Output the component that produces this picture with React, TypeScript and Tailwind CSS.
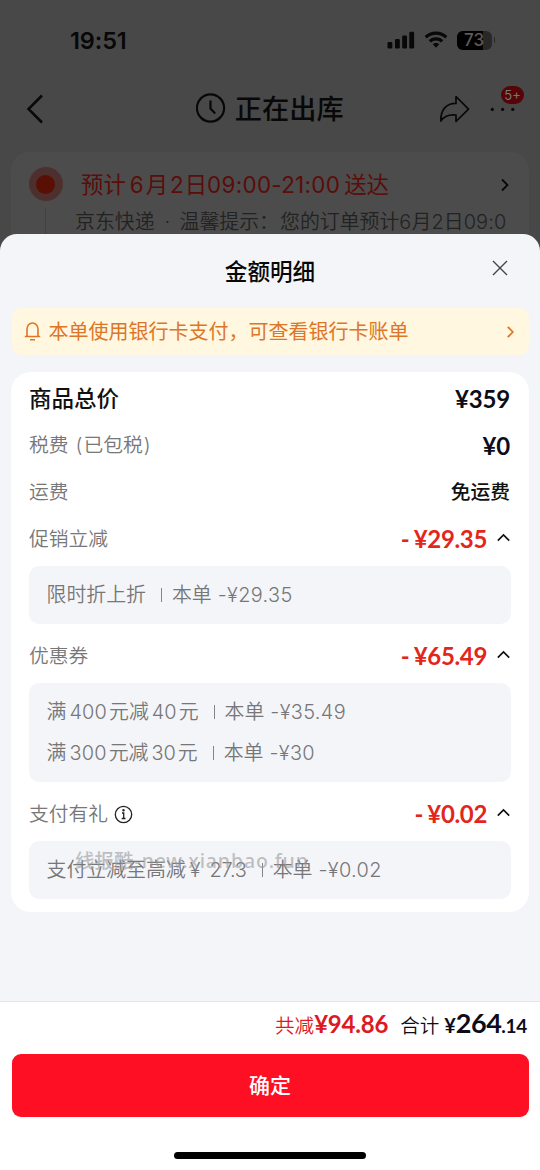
import React from "react";

const cjk = "font-['Inter','Noto_Sans_CJK_SC',sans-serif]";
const num = "font-['Lato','Noto_Sans_CJK_SC',sans-serif]";

function StatusBar() {
  return (
    <div className="flex h-[82px] items-center justify-between pl-[70px] pr-[45px]">
      <span className="text-[23.500px] font-semibold leading-none tracking-[-0.100px]">19:51</span>
      <div className="mb-[2px] flex items-center">
        <svg width="28" height="18" viewBox="0 0 28 18" fill="currentColor">
          <rect x="0.500" y="11" width="4.800" height="6.500" rx="1.300" />
          <rect x="8" y="8" width="4.800" height="9.500" rx="1.300" />
          <rect x="15.200" y="4.500" width="4.800" height="13" rx="1.300" />
          <rect x="22.300" y="0.800" width="4.800" height="16.700" rx="1.300" />
        </svg>
        <svg className="ml-[9px]" width="24" height="18" viewBox="0 0 24 18" fill="currentColor">
          <path d="M12 0.500C7.500 0.500 3.500 2.200 0.600 5.100L2.900 7.400C5.300 5.100 8.400 3.800 12 3.800s6.700 1.300 9.100 3.600L23.400 5.100C20.500 2.200 16.500 0.500 12 0.500Z" />
          <path d="M12 6.300c-2.900 0-5.400 1.100-7.300 2.900L7 11.500c1.300-1.200 3-2 5-2s3.700.8 5 2l2.300-2.300C17.400 7.400 14.900 6.300 12 6.300Z" />
          <path d="M12 12c-1.300 0-2.400.5-3.200 1.300L12 16.800l3.200-3.500C14.400 12.500 13.300 12 12 12Z" />
        </svg>
        <div className="relative ml-[9px] flex h-[19px] w-[35px] items-center justify-center overflow-hidden rounded-[6px] bg-[#282828]">
          <div className="absolute inset-y-0 left-0 w-[26px] bg-black" />
          <span className="relative text-[17px] font-medium leading-none text-[#5b5b5b]">73</span>
        </div>
        <div className="ml-[2px] h-[6px] w-[1.500px] rounded-r bg-[#292929]" />
      </div>
    </div>
  );
}

function NavBar() {
  return (
    <div className="grid h-[70px] grid-cols-[180px_1fr_180px] items-start">
      <svg className="ml-[25px] mt-[12px]" width="20" height="30" viewBox="0 0 20 30" fill="none" stroke="currentColor" strokeWidth="2.500">
        <path d="M17 1.500 3.500 15l13.500 13.500" />
      </svg>
      <div className="mt-[7px] flex items-center justify-center">
        <svg className="mb-[3px]" width="30" height="30" viewBox="0 0 30 30" fill="none" stroke="currentColor" strokeWidth="2.200">
          <circle cx="14.500" cy="15" r="13.600" />
          <path d="M14.500 7.500V15.500l4.700 5" />
        </svg>
        <span className="ml-[8.500px] mt-[1px] whitespace-nowrap text-[27.200px] font-medium leading-[40px]">正在出库</span>
      </div>
      <div className="mt-[13px] flex justify-end pr-[16px]">
        <svg className="mr-[20px]" width="31" height="28" viewBox="0 0 31 28" fill="none" stroke="currentColor" strokeWidth="1.700" strokeLinejoin="round">
          <path d="M17 1.500 29.500 14.200 17 26.500V20C10 19.300 5 21 1.800 26 1.500 14.500 7.500 8.300 17 8.400Z" />
        </svg>
        <div className="relative h-[28px] w-[34px]">
          <svg className="mt-[12px]" width="26" height="5" viewBox="0 0 26 5" fill="currentColor">
            <circle cx="2.300" cy="2.400" r="1.600" />
            <circle cx="12.600" cy="2.400" r="1.600" />
            <circle cx="22.800" cy="2.400" r="1.600" />
          </svg>
          <span className="absolute -top-[9px] left-[11px] flex h-[18px] w-[23px] items-center justify-center rounded-full bg-[#560408] text-[13px] leading-none text-[#777]">5+</span>
        </div>
      </div>
    </div>
  );
}

function Delivery() {
  return (
    <div className="mx-[11px] flex h-[110px] rounded-[18px] bg-[#4c4c4c] pl-[17px] pt-[15px]">
      <div className="flex w-[35px] flex-col items-center">
        <div className="flex size-[34px] shrink-0 items-center justify-center rounded-full bg-[#4d302d]">
          <div className="size-[19px] rounded-full bg-[#5a0f05]" />
        </div>
        <div className="mt-[7px] h-[50px] w-px bg-[#414141]" />
      </div>
      <div className="ml-[12px] flex-1">
        <div className="flex h-[35px] items-center justify-between pl-[6px] pr-[20px]">
          <span className="mt-[2px] flex items-center whitespace-nowrap text-[22.400px] leading-none text-[#5b0d09]">
            预计<span className="ml-[4px]">6</span><span className="ml-[2px]">月</span><span className="ml-[2px]">2</span><span className="ml-[1px]">日</span>
            <span className="tracking-[0.300px]">09:00-21:00</span><span className="ml-[4px]">送达</span>
          </span>
          <svg width="8" height="14" viewBox="0 0 8 14" fill="none" stroke="currentColor" strokeWidth="1.800"><path d="m1 1.500 5.500 5.500L1 12.500" /></svg>
        </div>
        <div className="mt-[6px] flex whitespace-nowrap text-[19.900px] font-[350] leading-[28px] text-[#222]">
          <span>京东快递</span><span className="ml-[10px] w-[15px]">·</span><span>温馨提示：<span className="ml-[1px]">您的订单预计</span></span><span className="tracking-[0.100px]">6月2日09:0</span>
        </div>
      </div>
    </div>
  );
}

function Caret() {
  return <svg className="mb-[4px] ml-[10px] mr-[1px]" width="13" height="9" viewBox="0 0 13 9" fill="none" stroke="#111" strokeWidth="1.700"><path d="M.8 7.700 6.500 2l5.700 5.700" /></svg>;
}

function Row({ label, children }: { label: React.ReactNode; children: React.ReactNode }) {
  return (
    <div className="flex h-[47px] items-center justify-between text-[19.800px] font-[350] leading-none text-[#777]">
      <div className="mt-[1px] flex items-center whitespace-nowrap">{label}</div>
      <div className="flex items-center whitespace-nowrap text-[#0c0d18]">{children}</div>
    </div>
  );
}

function Price({ value }: { value: string }) {
  return <span className={`${num} mr-[1px] text-[24px] font-bold tracking-[-0.150px]`}>¥{value}</span>;
}

function Discount({ value }: { value: string }) {
  return (
    <div className={`${num} mb-[1px] flex items-center text-[24px] font-bold text-[#e3261a]`}>
      <span className="mr-[4px]">-</span>
      <span className="tracking-[-0.350px]">¥{value}</span>
      <Caret />
    </div>
  );
}

function Detail({ name, amount }: { name: React.ReactNode; amount: string }) {
  return (
    <div className="flex h-[41px] items-center whitespace-nowrap text-[19.900px] font-[350] leading-none text-[#777]">
      <span className="mt-[2px] flex items-center">{name}</span>
      <span className="ml-[15px] h-[14px] w-px bg-[#858585]" />
      <span className="ml-[10px] mt-[2px]">本单</span>
      <span className="ml-[6px] mt-[2px] tracking-[0.350px]">-¥{amount}</span>
    </div>
  );
}

function Box({ children }: { children: React.ReactNode }) {
  return <div className="mt-[2.500px] rounded-[10px] bg-[#f4f5f9] px-[17.500px] py-[8.500px]">{children}</div>;
}

export default function App() {
  return (
    <div className={`relative h-[1170px] w-[540px] overflow-hidden bg-[#484848] text-[#080808] ${cjk}`}>
      <StatusBar />
      <NavBar />
      <Delivery />
      <section className="absolute inset-x-0 bottom-0 top-[234px] flex flex-col rounded-t-[17px] bg-[#f4f5f9]">
        <div className="grid h-[74px] grid-cols-[60px_1fr_60px] items-center">
          <span />
          <h1 className="mt-[2px] text-center text-[22.600px] font-medium leading-none">金额明细</h1>
          <svg className="mb-[6px] ml-[12px]" width="16" height="16" viewBox="0 0 16 16" fill="none" stroke="#444" strokeWidth="1.400"><path d="m1 1 14 14M15 1 1 15" /></svg>
        </div>
        <div className="mx-[11.500px] flex h-[47px] shrink-0 items-center rounded-[9px] bg-[#fff7df] pl-[12px] pr-[15px] text-[#de7627]">
          <svg className="mb-[1px]" width="17" height="20" viewBox="0 0 17 20" fill="none" stroke="currentColor" strokeWidth="1.600">
            <path d="M3 15.500V8a5.500 6 0 0 1 11 0v7.500M.8 15.500h15.400M6 18.700h5" />
          </svg>
          <span className="ml-[8px] mt-[1px] flex-1 whitespace-nowrap text-[20px] leading-none">本单使用银行卡支付，可查看银行卡账单</span>
          <svg width="7" height="12" viewBox="0 0 7 12" fill="none" stroke="currentColor" strokeWidth="1.800"><path d="m.8.800 5 5.200-5 5.200" /></svg>
        </div>
        <div className="mx-[11px] mt-[17px] h-[540px] shrink-0 rounded-[20px] bg-white px-[18px] pt-[3px]">
          <Row label={<span className="text-[22.500px] font-medium text-[#111]">商品总价</span>}>
            <Price value="359" />
          </Row>
          <Row label={<><span>税费</span><span className="ml-[7px]">(</span><span className="mx-[1px]">已包税</span><span>)</span></>}>
            <Price value="0" />
          </Row>
          <Row label="运费"><span className="mr-[1px] mt-[1px] font-medium text-[#111]">免运费</span></Row>
          <Row label="促销立减"><Discount value="29.35" /></Row>
          <Box><Detail name="限时折上折" amount="29.35" /></Box>
          <div className="mt-[9.500px]">
            <Row label="优惠券"><Discount value="65.49" /></Row>
            <Box>
              <Detail name={<>满<span className="ml-[3px] mr-[2px] tracking-[0.200px]">400</span>元减<span className="ml-[3px] mr-[2px]">40</span>元</>} amount="35.49" />
              <Detail name={<>满<span className="ml-[3px] mr-[2px] tracking-[0.200px]">300</span>元减<span className="ml-[3px] mr-[2px]">30</span>元</>} amount="30" />
            </Box>
          </div>
          <div className="mt-[9.500px]">
            <Row
              label={
                <>
                  支付有礼
                  <svg className="mb-[1px] ml-[6px]" width="19" height="19" viewBox="0 0 19 19" fill="none" stroke="#222" strokeWidth="1.300">
                    <circle cx="9.500" cy="9.500" r="8.200" />
                    <path d="M8 8h1.700v5.500M7.700 13.500h3.800" />
                    <circle cx="9.500" cy="5.300" r=".6" fill="#222" />
                  </svg>
                </>
              }
            >
              <Discount value="0.02" />
            </Row>
            <div className="relative">
              <Box><Detail name={<>支付立减至高减<span className="ml-[4px]">¥</span><span className="ml-[9px] tracking-[-0.200px]">27.3</span></>} amount="0.02" /></Box>
              <span className="absolute left-[46px] top-[9px] flex whitespace-nowrap font-['Noto_Sans','Noto_Sans_CJK_SC',sans-serif] text-[19.500px] font-medium leading-[22px] text-[#999]/60">线报酷<span className="ml-[1px] tracking-[0.850px]">-new.xianbao.fun</span></span>
            </div>
          </div>
        </div>
        <div className="mt-[89px] flex-1 border-t border-[#e5e6e8] bg-white">
          <div className="flex h-[52px] items-baseline justify-end whitespace-nowrap pr-[13px] pt-[6px] text-[19.500px] leading-[30px] text-[#0c0d18]">
            <span className="font-[350] text-[#df1923]">共减</span>
            <span className={`${num} mr-[12px] text-[24px] font-bold tracking-[-0.200px] text-[#df1923]`}>¥94.86</span>
            <span className="font-[350]">合计</span>
            <span className={`${num} ml-[5px] text-[20px] font-bold`}>¥</span>
            <span className={`${num} text-[27px] font-bold tracking-[-0.500px]`}>264</span>
            <span className={`${num} text-[19px] font-bold tracking-[-0.300px]`}>.14</span>
          </div>
          <button className="mx-[11.500px] flex h-[63px] w-[517px] items-center justify-center rounded-[9px] bg-[#ff0f23] text-[21px] font-medium text-white">确定</button>
          <div className="mx-auto mt-[35px] h-[7px] w-[192px] rounded-full bg-black" />
        </div>
      </section>
    </div>
  );
}
